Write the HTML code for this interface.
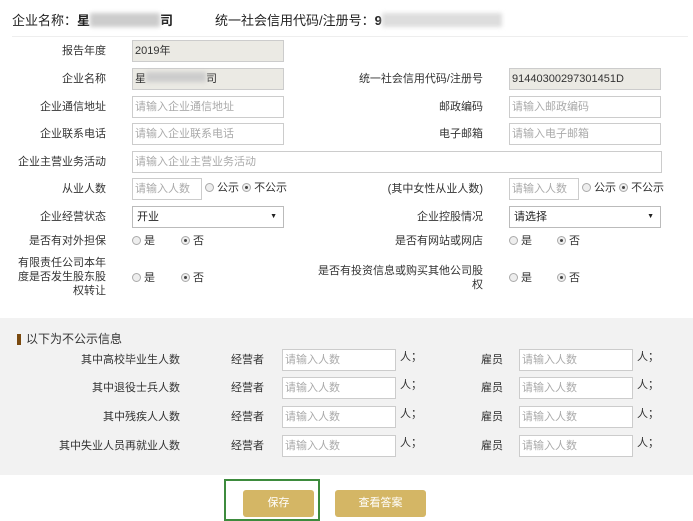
<!DOCTYPE html>
<html><head><meta charset="utf-8"><style>
*{margin:0;padding:0;box-sizing:border-box}
body{width:693px;height:518px;overflow:hidden;background:#fff;font-family:"Liberation Sans","Noto Sans CJK SC",sans-serif;font-size:11px;color:#333;position:relative}
.a{position:absolute;white-space:nowrap;line-height:14px}
.l{position:absolute;text-align:right;white-space:nowrap;line-height:14px}
.m{line-height:22px}
.in{position:absolute;border:1px solid #ccc;background:#fff;color:#aaa;padding-left:2px;line-height:20px;font-size:11px;height:22px}
.ro{background:#ebeae4;color:#333}
.sel{position:absolute;border:1px solid #bbb;background:#fff;color:#222;padding-left:4px;line-height:20px;height:22px;font-size:11px}
.sel:after{content:"▼";position:absolute;right:6px;top:0;font-size:7px}
.r{display:inline-block;width:9px;height:9px;border:1px solid #aaa;border-radius:50%;background:#eee;vertical-align:-1px;margin-right:3px;position:relative}
.r.on:after{content:"";position:absolute;left:2px;top:2px;width:3px;height:3px;border-radius:50%;background:#444}
.btn{position:absolute;background:#d4b665;color:#fff;border-radius:3px;text-align:center;line-height:27px;font-size:11px}
</style></head><body>
<div class="a" style="left:12px;top:13px;font-size:13px;color:#222">企业名称：<b>星</b><span style="display:inline-block;width:70px;height:14px;background:#ccc;vertical-align:-2px;filter:blur(2px)"></span><b>司</b></div>
<div class="a" style="left:215px;top:13px;font-size:13px;color:#222">统一社会信用代码/注册号：<b>9</b><span style="display:inline-block;width:120px;height:14px;background:#ddd;vertical-align:-2px;filter:blur(2px)"></span></div>
<div class="a" style="left:12px;top:36px;width:676px;height:1px;background:#eee"></div>

<div class="l" style="right:587px;top:44px">报告年度</div>
<div class="in ro" style="left:132px;top:40px;width:152px">2019年</div>
<div class="l" style="right:587px;top:72px">企业名称</div>
<div class="in ro" style="left:132px;top:68px;width:152px">星<span style="display:inline-block;width:60px;height:10px;background:#ccc;filter:blur(2px)"></span>司</div>
<div class="l" style="right:210px;top:72px">统一社会信用代码/注册号</div>
<div class="in ro" style="left:509px;top:68px;width:152px">91440300297301451D</div>
<div class="l" style="right:587px;top:100px">企业通信地址</div>
<div class="in" style="left:132px;top:96px;width:152px">请输入企业通信地址</div>
<div class="l" style="right:210px;top:100px">邮政编码</div>
<div class="in" style="left:509px;top:96px;width:152px">请输入邮政编码</div>
<div class="l" style="right:587px;top:127px">企业联系电话</div>
<div class="in" style="left:132px;top:123px;width:152px">请输入企业联系电话</div>
<div class="l" style="right:210px;top:127px">电子邮箱</div>
<div class="in" style="left:509px;top:123px;width:152px">请输入电子邮箱</div>
<div class="l" style="right:587px;top:155px">企业主营业务活动</div>
<div class="in" style="left:132px;top:151px;width:530px">请输入企业主营业务活动</div>
<div class="l" style="right:587px;top:182px">从业人数</div>
<div class="in" style="left:132px;top:178px;width:70px">请输入人数</div>
<div class="a" style="left:205px;top:181px"><span class="r"></span>公示 <span class="r on"></span>不公示</div>
<div class="l" style="right:210px;top:182px">(其中女性从业人数)</div>
<div class="in" style="left:509px;top:178px;width:70px">请输入人数</div>
<div class="a" style="left:582px;top:181px"><span class="r"></span>公示 <span class="r on"></span>不公示</div>
<div class="l" style="right:587px;top:210px">企业经营状态</div>
<div class="sel" style="left:132px;top:206px;width:152px">开业</div>
<div class="l" style="right:210px;top:210px">企业控股情况</div>
<div class="sel" style="left:509px;top:206px;width:152px">请选择</div>
<div class="l" style="right:587px;top:234px">是否有对外担保</div>
<div class="a" style="left:132px;top:234px"><span class="r"></span>是</div>
<div class="a" style="left:181px;top:234px"><span class="r on"></span>否</div>
<div class="l" style="right:210px;top:234px">是否有网站或网店</div>
<div class="a" style="left:509px;top:234px"><span class="r"></span>是</div>
<div class="a" style="left:557px;top:234px"><span class="r on"></span>否</div>
<div class="l" style="right:587px;top:256px">有限责任公司本年<br>度是否发生股东股<br>权转让</div>
<div class="a" style="left:132px;top:271px"><span class="r"></span>是</div>
<div class="a" style="left:181px;top:271px"><span class="r on"></span>否</div>
<div class="l" style="right:210px;top:264px">是否有投资信息或购买其他公司股<br>权</div>
<div class="a" style="left:509px;top:271px"><span class="r"></span>是</div>
<div class="a" style="left:557px;top:271px"><span class="r on"></span>否</div>

<div class="a" style="left:0;top:318px;width:693px;height:157px;background:#f2f2f2"></div>
<div class="a" style="left:17px;top:334px;width:4px;height:11px;background:#7a4a10"></div>
<div class="a" style="left:26px;top:332px;font-size:12px;color:#333">以下为不公示信息</div>

<div class="l m" style="right:513px;top:349px">其中高校毕业生人数</div>
<div class="l m" style="right:513px;top:377px">其中退役士兵人数</div>
<div class="l m" style="right:513px;top:406px">其中残疾人人数</div>
<div class="l m" style="right:513px;top:435px">其中失业人员再就业人数</div>

<div class="a m" style="left:231px;top:349px">经营者</div>
<div class="a m" style="left:231px;top:377px">经营者</div>
<div class="a m" style="left:231px;top:406px">经营者</div>
<div class="a m" style="left:231px;top:435px">经营者</div>
<div class="in" style="left:282px;top:349px;width:114px">请输入人数</div>
<div class="in" style="left:282px;top:377px;width:114px">请输入人数</div>
<div class="in" style="left:282px;top:406px;width:114px">请输入人数</div>
<div class="in" style="left:282px;top:435px;width:114px">请输入人数</div>
<div class="a" style="left:400px;top:350px">人；</div>
<div class="a" style="left:400px;top:378px">人；</div>
<div class="a" style="left:400px;top:407px">人；</div>
<div class="a" style="left:400px;top:436px">人；</div>
<div class="a m" style="left:481px;top:349px">雇员</div>
<div class="a m" style="left:481px;top:377px">雇员</div>
<div class="a m" style="left:481px;top:406px">雇员</div>
<div class="a m" style="left:481px;top:435px">雇员</div>
<div class="in" style="left:519px;top:349px;width:114px">请输入人数</div>
<div class="in" style="left:519px;top:377px;width:114px">请输入人数</div>
<div class="in" style="left:519px;top:406px;width:114px">请输入人数</div>
<div class="in" style="left:519px;top:435px;width:114px">请输入人数</div>
<div class="a" style="left:637px;top:350px">人；</div>
<div class="a" style="left:637px;top:378px">人；</div>
<div class="a" style="left:637px;top:407px">人；</div>
<div class="a" style="left:637px;top:436px">人；</div>

<div class="a" style="left:224px;top:479px;width:96px;height:42px;border:2px solid #3d8b3d"></div>
<div class="btn" style="left:243px;top:490px;width:71px">保存</div>
<div class="btn" style="left:335px;top:490px;width:91px">查看答案</div>
</body></html>
